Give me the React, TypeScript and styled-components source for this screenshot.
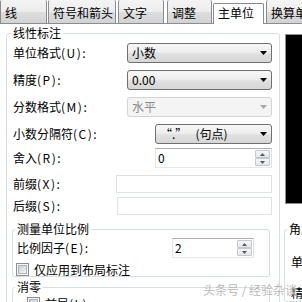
import React from "react";
import styled, { createGlobalStyle } from "styled-components";

const Global = createGlobalStyle`
  html, body { margin: 0; padding: 0; background: #fff; }
  body { font-family: "Noto Sans CJK SC", "Liberation Sans", sans-serif; font-size: 12px; }
`;

const FONT = `"Noto Sans CJK SC", "Liberation Sans", sans-serif`;

const Page = styled.div`
  position: relative;
  width: 302px;
  height: 302px;
  overflow: hidden;
  background: #fff;
  color: #000;
  font-family: ${FONT};
  font-size: 12px;
  line-height: 16px;
`;

const TabStrip = styled.div`
  display: flex;
  align-items: flex-end;
  height: 24px;
  box-sizing: border-box;
  border-bottom: 1px solid #898c95;
  background: #fff;
`;

const Tab = styled.div<{ $w: number; $gap: number; $active?: boolean }>`
  position: relative;
  z-index: ${(p) => (p.$active ? 2 : 1)};
  flex: none;
  box-sizing: border-box;
  width: ${(p) => p.$w}px;
  margin-left: ${(p) => p.$gap}px;
  height: ${(p) => (p.$active ? 21 : 23)}px;
  margin-bottom: ${(p) => (p.$active ? -1 : 0)}px;
  padding: ${(p) => (p.$active ? "1px 0 0 4px" : "5px 0 0 4px")};
  border: 1px solid #898c95;
  border-top-width: ${(p) => (p.$active ? 1 : 0)}px;
  border-bottom-width: 0;
  border-radius: 2px 2px 0 0;
  background: ${(p) =>
    p.$active
      ? "#fff"
      : "linear-gradient(#f4f4f4, #ececec 50%, #dedede 52%, #d2d2d2)"};
  white-space: nowrap;
  overflow: hidden;
`;

const Panel = styled.div`
  display: flex;
  align-items: flex-start;
  padding-left: 6px;
`;

const Group = styled.fieldset<{ $w?: number; $mt: number; $pl: number; $mr?: number; $ml?: number }>`
  box-sizing: border-box;
  min-width: 0;
  width: ${(p) => (p.$w ? `${p.$w}px` : "auto")};
  margin: ${(p) => p.$mt}px ${(p) => p.$mr ?? 0}px 0 ${(p) => p.$ml ?? 0}px;
  padding: 0 0 0 ${(p) => p.$pl}px;
  border: 1px solid #d5dfe5;
  border-radius: 3px;
`;

const MainGroup = styled(Group)`
  flex: none;
  height: 300px;
  padding: 2px 7px 0 6px;
`;

const Legend = styled.legend<{ $ml?: number }>`
  padding: 0 2px;
  margin-left: ${(p) => p.$ml ?? -2}px;
  font-size: 12px;
  line-height: 16px;
  white-space: nowrap;
`;

const Row = styled.div<{ $h: number; $mt: number; $start?: boolean }>`
  display: flex;
  align-items: center;
  justify-content: ${(p) => (p.$start ? "flex-start" : "space-between")};
  height: ${(p) => p.$h}px;
  margin-top: ${(p) => p.$mt}px;
`;

const Label = styled.span`
  white-space: nowrap;
  line-height: 16px;
`;

const Key = styled.span`
  letter-spacing: 1.5px;
`;

const Combo = styled.div<{ $w: number; $disabled?: boolean }>`
  box-sizing: border-box;
  flex: none;
  display: flex;
  align-items: center;
  justify-content: space-between;
  width: ${(p) => p.$w}px;
  height: 20px;
  padding: 0 4px 0 4px;
  border: 1px solid ${(p) => (p.$disabled ? "#d3d3d3" : "#707070")};
  border-radius: 3px;
  color: ${(p) => (p.$disabled ? "#8b8b8b" : "#000")};
  background: ${(p) =>
    p.$disabled
      ? "#f4f4f4"
      : "linear-gradient(#f7f7f7, #eeeeee 45%, #e0e0e0 55%, #d6d6d6)"};
  white-space: pre;
`;

const Arrow = ({ color }: { color: string }) => (
  <svg width="7" height="4" viewBox="0 0 7 4">
    <polygon points="0,0 7,0 3.5,4" fill={color} />
  </svg>
);

const Spin = styled.div<{ $w: number; $mr?: number; $auto?: boolean }>`
  box-sizing: border-box;
  flex: none;
  display: flex;
  align-items: center;
  justify-content: space-between;
  width: ${(p) => p.$w}px;
  height: 20px;
  margin-left: ${(p) => (p.$auto ? "auto" : "0")};
  margin-right: ${(p) => p.$mr ?? 0}px;
  padding: 0 1px 0 2px;
  border: 1px solid;
  border-color: #abadb3 #dbdfe6 #e3e9ef #e2e3ea;
  background: #fff;
`;

const SpinBtns = styled.div`
  display: flex;
  flex-direction: column;
  gap: 0;
`;

const SpinBtn = styled.div`
  box-sizing: border-box;
  width: 15px;
  height: 8px;
  display: flex;
  align-items: center;
  justify-content: center;
  border: 1px solid #c3c7ce;
  border-radius: 1px;
  background: linear-gradient(#f6f6f6, #e4e6ea);
`;

const Tri = ({ up }: { up?: boolean }) => (
  <svg width="5" height="3" viewBox="0 0 5 3">
    <polygon points={up ? "0,3 5,3 2.5,0" : "0,0 5,0 2.5,3"} fill="#4d5a6e" />
  </svg>
);

const TextInput = styled.div<{ $w: number }>`
  box-sizing: border-box;
  flex: none;
  width: ${(p) => p.$w}px;
  height: 18px;
  border: 1px solid #dde1e8;
  background: #fff;
`;

const CheckRow = styled.div<{ $mt: number; $ml: number }>`
  display: flex;
  align-items: center;
  gap: 5px;
  height: 13px;
  margin-top: ${(p) => p.$mt}px;
  margin-left: ${(p) => p.$ml}px;
`;

const Check = styled.span`
  position: relative;
  flex: none;
  box-sizing: border-box;
  width: 13px;
  height: 13px;
  border: 1px solid #8e8f8f;
  background: #f6f6f6;
  &::after {
    content: "";
    position: absolute;
    left: 1px;
    top: 1px;
    width: 7px;
    height: 7px;
    border: 1px solid #aeb3b9;
    background: linear-gradient(135deg, #cbcfd5, #f3f3f3);
  }
`;

const RightCol = styled.div`
  flex: none;
  width: 40px;
  display: flex;
  flex-direction: column;
  margin-left: 4px;
`;

const Preview = styled.div`
  box-sizing: border-box;
  width: 40px;
  height: 170px;
  margin: 10px 0 0 1px;
  border: 1px solid #8c8c8c;
  background: #000;
`;

const Watermark = styled.div`
  position: absolute;
  left: 203px;
  top: 282px;
  color: rgba(150, 150, 150, 0.7);
  font-size: 12px;
  line-height: 16px;
  white-space: nowrap;
  text-shadow: 0 0 1px #fff;
`;

const tabs = [
  { t: "线", w: 47, g: 0 },
  { t: "符号和箭头", w: 68, g: 1 },
  { t: "文字", w: 46, g: 2 },
  { t: "调整", w: 45, g: 3 },
  { t: "主单位", w: 51, g: 1, a: true },
  { t: "换算单位", w: 60, g: 2 },
];

const L = ({ text, k }: { text: string; k: string }) => (
  <Label>
    {text}
    <Key>({k}):</Key>
  </Label>
);

const SpinButtons = () => (
  <SpinBtns>
    <SpinBtn>
      <Tri up />
    </SpinBtn>
    <SpinBtn>
      <Tri />
    </SpinBtn>
  </SpinBtns>
);

export default function App() {
  return (
    <Page>
      <Global />
      <TabStrip>
        {tabs.map((x) => (
          <Tab key={x.t} $w={x.w} $gap={x.g} $active={x.a}>
            {x.t}
          </Tab>
        ))}
      </TabStrip>
      <Panel>
        <MainGroup $w={274} $mt={1} $pl={6}>
          <Legend>线性标注</Legend>
          <Row $h={20} $mt={0}>
            <L text="单位格式" k="U" />
            <Combo $w={145}>
              <span>小数</span>
              <Arrow color="#000" />
            </Combo>
          </Row>
          <Row $h={20} $mt={7}>
            <L text="精度" k="P" />
            <Combo $w={145}>
              <span>0.00</span>
              <Arrow color="#000" />
            </Combo>
          </Row>
          <Row $h={20} $mt={7}>
            <L text="分数格式" k="M" />
            <Combo $w={145} $disabled>
              <span>水平</span>
              <Arrow color="#a8a8a8" />
            </Combo>
          </Row>
          <Row $h={20} $mt={7}>
            <L text="小数分隔符" k="C" />
            <Combo $w={117}>
              <span>{"“.”   (句点)"}</span>
              <Arrow color="#000" />
            </Combo>
          </Row>
          <Row $h={20} $mt={4}>
            <L text="舍入" k="R" />
            <Spin $w={117}>
              <span>0</span>
              <SpinButtons />
            </Spin>
          </Row>
          <Row $h={18} $mt={7}>
            <L text="前缀" k="X" />
            <TextInput $w={156} />
          </Row>
          <Row $h={18} $mt={4}>
            <L text="后缀" k="S" />
            <TextInput $w={155} />
          </Row>
          <Group $mt={6} $pl={4} $ml={-1} $mr={2}>
            <Legend>测量单位比例</Legend>
            <Row $h={20} $mt={1} $start>
              <L text="比例因子" k="E" />
              <Spin $w={82} $auto $mr={15}>
                <span>2</span>
                <SpinButtons />
              </Spin>
            </Row>
            <CheckRow $mt={5} $ml={-1}>
              <Check />
              <Label>仅应用到布局标注</Label>
            </CheckRow>
          </Group>
          <Group $mt={2} $pl={4} $ml={-1} $mr={2}>
            <Legend>消零</Legend>
            <CheckRow $mt={2} $ml={10}>
              <Check />
              <Label>
                前导<Key>(L)</Key>
              </Label>
            </CheckRow>
          </Group>
        </MainGroup>
        <RightCol>
          <Preview />
          <Group $w={40} $mt={17} $pl={6}>
            <Legend $ml={-4}>角度标注</Legend>
            <Row $h={16} $mt={17} $start>
              <L text="单位格式" k="A" />
            </Row>
            <Row $h={16} $mt={15} $start>
              <L text="精度" k="O" />
            </Row>
          </Group>
        </RightCol>
      </Panel>
      <Watermark>头条号 / 经验杂谈</Watermark>
    </Page>
  );
}
